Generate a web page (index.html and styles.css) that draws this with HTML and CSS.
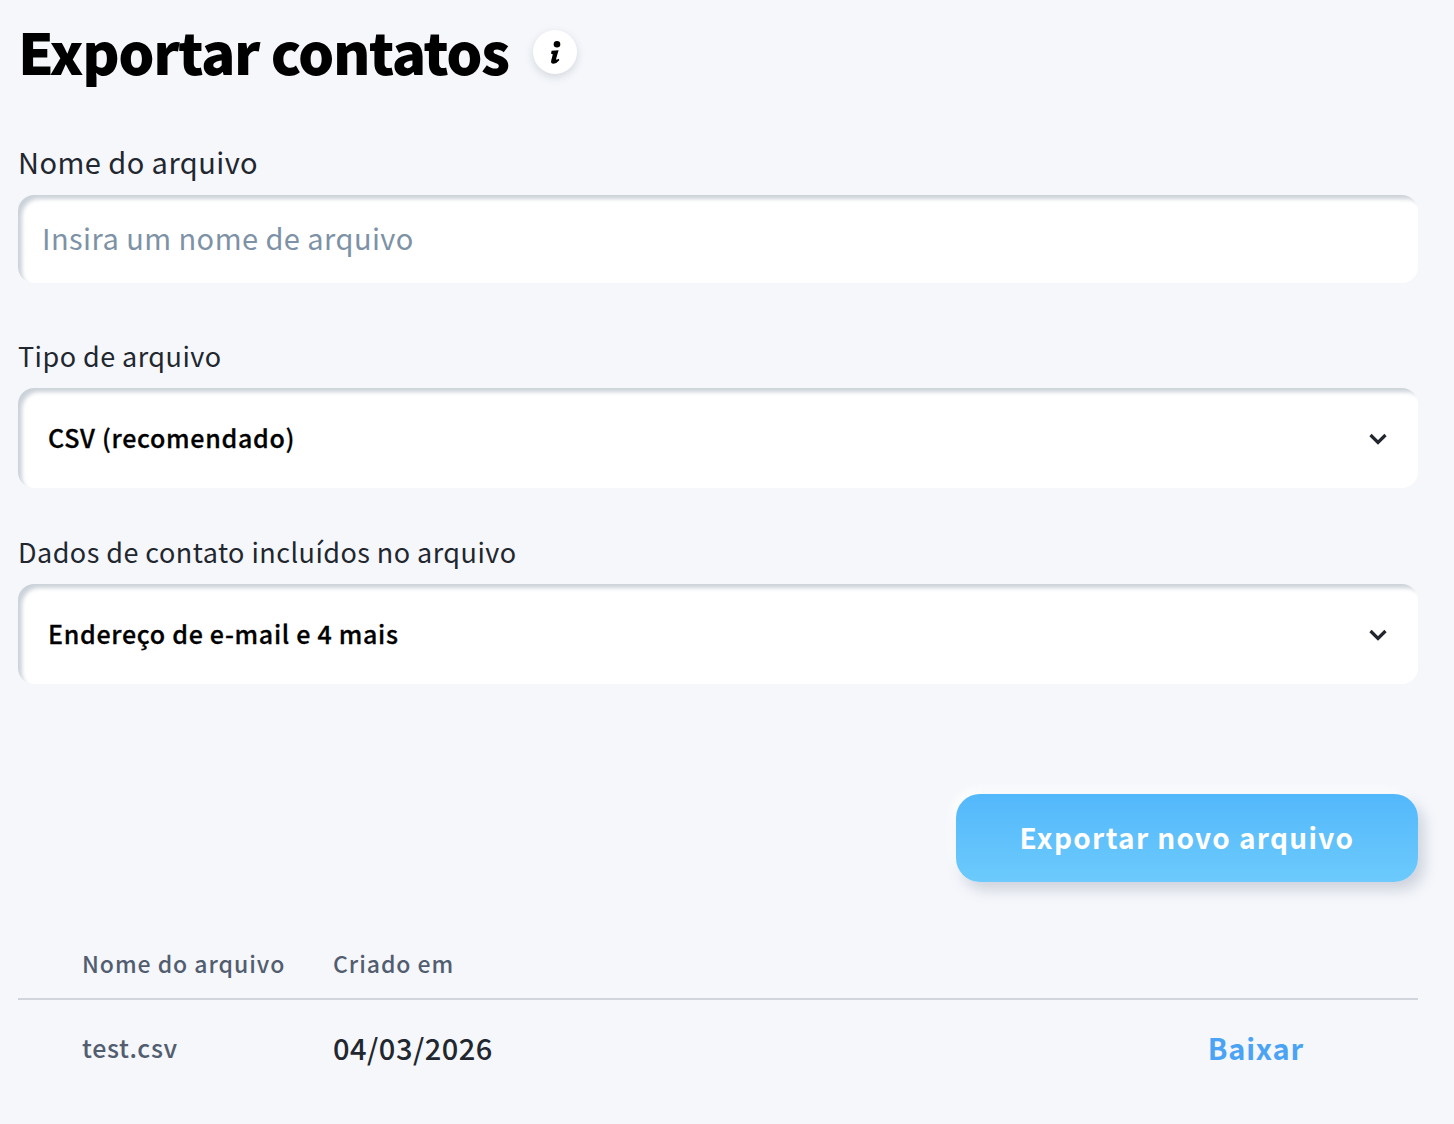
FILE: index.html
```html
<!DOCTYPE html>
<html lang="pt-BR">
<head>
  <meta charset="UTF-8" />
  <meta name="viewport" content="width=device-width, initial-scale=1.0" />
  <title>Exportar contatos</title>
  <link rel="stylesheet" href="styles.css">
</head>
<body>
  <div class="page">

    <div class="title-row">
      <h1>Exportar contatos</h1>
      <button class="info-btn" type="button" aria-label="info">
        <svg width="12" height="23" viewBox="0 0 12 23">
          <circle cx="8" cy="3.3" r="3.3" fill="#000" />
          <path d="M2.6 9.8 L9.6 9.3 L7.2 17.5 Q7 19 8.2 18.6 L9.8 17.8 L10.3 19.3 Q7.5 22.8 4.5 22.8 Q1.5 22.8 2.2 19.5 L3.7 13.8 Q3.8 12.7 2 12.9 Z" fill="#000" />
        </svg>
      </button>
    </div>

    <label class="field-label label-name">Nome do arquivo</label>
    <input class="text-input" type="text" placeholder="Insira um nome de arquivo" />

    <label class="field-label label-type">Tipo de arquivo</label>
    <div class="select-box">
      <span>CSV (recomendado)</span>
      <svg class="chevron" width="20" height="14" viewBox="0 0 20 14">
        <path d="M2.5 3 L10 10.5 L17.5 3" fill="none" stroke="#22272f" stroke-width="3.2" />
      </svg>
    </div>

    <label class="field-label label-data">Dados de contato incluídos no arquivo</label>
    <div class="select-box">
      <span>Endereço de e-mail e 4 mais</span>
      <svg class="chevron" width="20" height="14" viewBox="0 0 20 14">
        <path d="M2.5 3 L10 10.5 L17.5 3" fill="none" stroke="#22272f" stroke-width="3.2" />
      </svg>
    </div>

    <div class="actions">
      <button class="export-btn" type="button">Exportar novo arquivo</button>
    </div>

    <div class="files">
      <div class="files-head">
        <span>Nome do arquivo</span>
        <span>Criado em</span>
        <span></span>
      </div>
      <div class="files-row">
        <span class="file-name">test.csv</span>
        <span class="file-date">04/03/2026</span>
        <a class="file-link" href="#">Baixar</a>
      </div>
    </div>

  </div>
</body>
</html>
```

FILE: styles.css
```css
* {
  box-sizing: border-box;
}
body, html {
  margin: 0;
  padding: 0;
  background: #f5f7fb;
  font-family: "Noto Sans CJK JP", "Noto Sans", sans-serif;
  overflow: hidden;
}
.page {
  width: 1400px;
  margin-left: 18px;
  height: 1124px;
}
.title-row {
  display: flex;
  align-items: center;
  height: 104px;
}
.title-row h1 {
  margin: 0;
  padding-bottom: 5px;
  font-size: 57px;
  line-height: 100px;
  font-weight: 900;
  letter-spacing: -1.4px;
  color: #000;
}
.info-btn {
  width: 44px;
  height: 44px;
  margin-left: 24px;
  padding: 0;
  border: none;
  border-radius: 50%;
  background: #fff;
  box-shadow: 0 3px 8px rgba(60, 70, 90, 0.18);
  display: flex;
  align-items: center;
  justify-content: center;
}
.field-label {
  display: block;
  font-size: 27px;
  line-height: 40px;
  letter-spacing: 0.45px;
  color: #22272f;
}
.label-name {
  font-size: 29px;
  margin-top: 37px;
  margin-bottom: 14px;
}
.label-type {
  margin-top: 53px;
  margin-bottom: 12px;
}
.label-data {
  margin-top: 44px;
  margin-bottom: 12px;
}
.text-input {
  display: block;
  width: 100%;
  height: 88px;
  padding: 0 24px 5px;
  border: none;
  outline: none;
  border-radius: 16px;
  background: #fff;
  font-family: inherit;
  font-size: 29px;
  letter-spacing: 0.45px;
  box-shadow: inset 5px 5px 4px -1px #cbd2d9;
}
.text-input::placeholder {
  color: #7d92a6;
  opacity: 1;
}
.select-box {
  display: flex;
  align-items: center;
  justify-content: space-between;
  height: 100px;
  padding: 0 30px 2px 30px;
  border-radius: 16px;
  background: #fff;
  font-size: 25px;
  font-weight: 500;
  letter-spacing: 0.7px;
  -webkit-text-stroke: 0.3px #000;
  color: #000;
  box-shadow: inset 5px 5px 4px -1px #cbd2d9;
}
.chevron {
  margin-top: 4px;
}
.actions {
  display: flex;
  justify-content: flex-end;
  margin-top: 110px;
}
.export-btn {
  width: 462px;
  height: 88px;
  padding: 0 0 3px;
  border: none;
  border-radius: 24px;
  background: linear-gradient(180deg, #53b8fb, #6ccafc);
  color: #fff;
  font-family: inherit;
  font-size: 28px;
  font-weight: 700;
  letter-spacing: 1.33px;
  box-shadow: 6px 8px 14px rgba(90, 105, 130, 0.25), -4px -4px 10px #fff;
}
.files {
  margin-top: 52px;
}
.files-head,
.files-row {
  display: grid;
  grid-template-columns: 251px 1fr auto;
  padding-left: 64px;
  padding-right: 114px;
  align-items: center;
}
.files-head {
  height: 66px;
  padding-bottom: 6px;
  border-bottom: 2px solid #d2d5db;
  font-size: 23px;
  font-weight: 500;
  letter-spacing: 0.95px;
  color: #525e70;
}
.files-row {
  height: 98px;
  padding-bottom: 4px;
}
.file-name {
  font-size: 25px;
  font-weight: 500;
  letter-spacing: 0.65px;
  color: #525e70;
}
.file-date {
  font-size: 29px;
  font-weight: 500;
  letter-spacing: 0.5px;
  color: #22272f;
}
.file-link {
  font-size: 29px;
  font-weight: 700;
  letter-spacing: 0.8px;
  color: #4aa3f5;
  text-decoration: none;
}
```
